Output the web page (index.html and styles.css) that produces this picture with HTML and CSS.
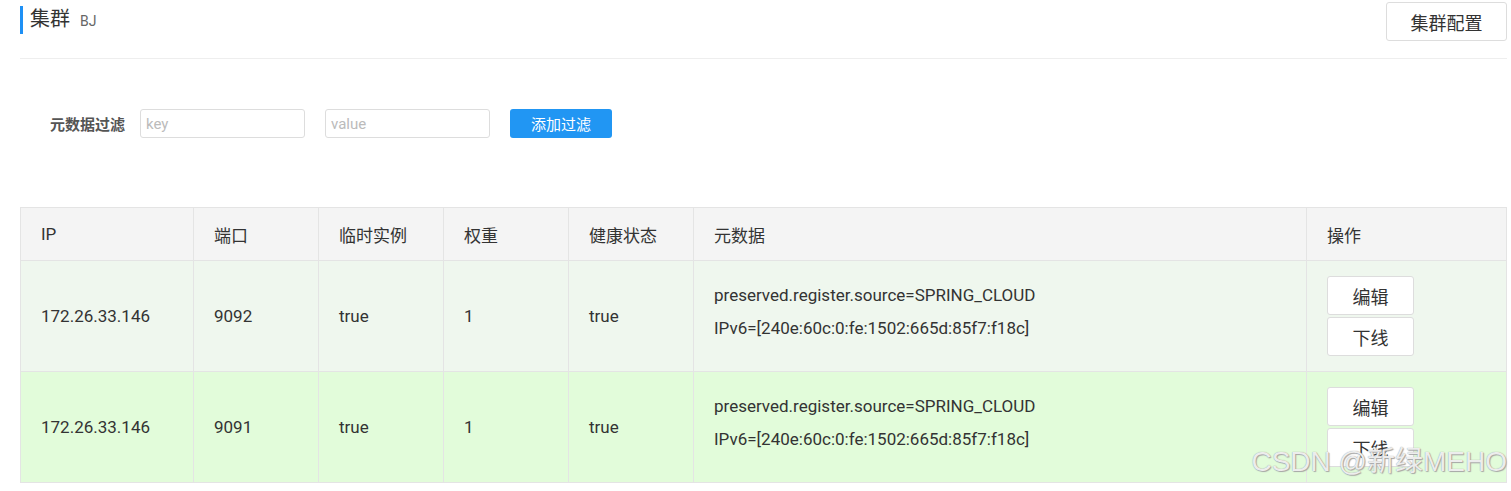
FILE: index.html
```html
<!DOCTYPE html>
<html lang="zh">

<head>
    <meta charset="UTF-8">
    <meta name="viewport" content="width=device-width, initial-scale=1.0">
    <title>集群 BJ</title>
    <link rel="stylesheet" href="styles.css">
</head>

<body>
    <div class="page">
        <div class="page-header">
            <h2 class="title">集群<small>BJ</small></h2>
            <button class="btn btn-config">集群配置</button>
        </div>

        <div class="filter">
            <label class="filter-label">元数据过滤</label>
            <input type="text" class="filter-input" placeholder="key">
            <input type="text" class="filter-input" placeholder="value">
            <button class="btn-primary">添加过滤</button>
        </div>

        <table class="instances">
            <thead>
                <tr>
                    <th class="col-ip">IP</th>
                    <th class="col-port">端口</th>
                    <th class="col-eph">临时实例</th>
                    <th class="col-weight">权重</th>
                    <th class="col-health">健康状态</th>
                    <th class="col-meta">元数据</th>
                    <th class="col-ops">操作</th>
                </tr>
            </thead>
            <tbody>
                <tr class="row-odd">
                    <td>172.26.33.146</td>
                    <td>9092</td>
                    <td>true</td>
                    <td>1</td>
                    <td>true</td>
                    <td class="meta">
                        <div>preserved.register.source=SPRING_CLOUD</div>
                        <div>IPv6=[240e:60c:0:fe:1502:665d:85f7:f18c]</div>
                    </td>
                    <td>
                        <div class="ops">
                            <button class="btn btn-op">编辑</button>
                            <button class="btn btn-op">下线</button>
                        </div>
                    </td>
                </tr>
                <tr class="row-even">
                    <td>172.26.33.146</td>
                    <td>9091</td>
                    <td>true</td>
                    <td>1</td>
                    <td>true</td>
                    <td class="meta">
                        <div>preserved.register.source=SPRING_CLOUD</div>
                        <div>IPv6=[240e:60c:0:fe:1502:665d:85f7:f18c]</div>
                    </td>
                    <td>
                        <div class="ops">
                            <button class="btn btn-op">编辑</button>
                            <button class="btn btn-op">下线</button>
                        </div>
                    </td>
                </tr>
            </tbody>
        </table>
    </div>

    <div class="watermark">CSDN @新绿MEHO</div>
</body>

</html>
```

FILE: styles.css
```css
* {
    margin: 0;
    padding: 0;
    box-sizing: border-box;
    font-family: Roboto, "Noto Sans CJK SC", sans-serif;
}

body {
    background: #fff;
    color: #333;
}

.page {
    padding: 0 4px 0 20px;
}

.page-header {
    display: flex;
    justify-content: space-between;
    align-items: flex-start;
    height: 59px;
    border-bottom: 1px solid #eee;
}

.title {
    margin-top: 6px;
    padding-left: 7px;
    border-left: 3px solid #1e90f5;
    font-size: 20px;
    font-weight: normal;
    line-height: 26px;
    color: #333;
}

.title small {
    margin-left: 10px;
    font-size: 14px;
    color: #666;
}

.btn {
    background: #fff;
    border: 1px solid #ddd;
    border-radius: 3px;
    color: #333;
    font-size: 18px;
    cursor: pointer;
}

.btn-config {
    width: 121px;
    height: 39px;
    margin-top: 2px;
}

.filter {
    display: flex;
    align-items: center;
    margin-top: 50px;
    padding-left: 30px;
    height: 29px;
}

.filter-label {
    width: 90px;
    font-size: 15px;
    font-weight: bold;
    color: #555;
}

.filter-input {
    width: 165px;
    height: 29px;
    margin-right: 20px;
    padding: 0 5px;
    border: 1px solid #ddd;
    border-radius: 3px;
    font-size: 15px;
    color: #333;
}

.filter-input::placeholder {
    color: #bbb;
}

.btn-primary {
    width: 102px;
    height: 29px;
    border: none;
    border-radius: 3px;
    background: #2196f3;
    color: #fff;
    font-size: 15px;
}

.instances {
    width: 100%;
    margin-top: 69px;
    border-collapse: collapse;
    font-size: 17px;
    color: #333;
}

.instances th,
.instances td {
    border: 1px solid #e4e4e4;
    padding: 0 20px;
    text-align: left;
    font-weight: normal;
    vertical-align: middle;
}

.instances th {
    height: 53px;
    background: #f4f4f4;
}

.instances td {
    height: 111px;
}

.col-ip {
    width: 173px;
}

.col-port,
.col-eph,
.col-weight,
.col-health {
    width: 125px;
}

.col-ops {
    width: 200px;
}

.row-odd td {
    background: #eff7ee;
}

.row-even td {
    background: #e2fcda;
}

.instances td.meta {
    line-height: 33px;
    padding-bottom: 8px;
}

.ops {
    display: flex;
    flex-direction: column;
    gap: 2px;
    width: 87px;
}

.btn-op {
    height: 39px;
}

.watermark {
    position: absolute;
    right: 4px;
    bottom: 12px;
    font-size: 28px;
    color: rgba(255, 255, 255, 0.85);
    text-shadow: 0 0 1px #888, 1px 1px 1px #aaa;
    font-family: "Liberation Sans", "Noto Sans CJK SC", sans-serif;
}
```
